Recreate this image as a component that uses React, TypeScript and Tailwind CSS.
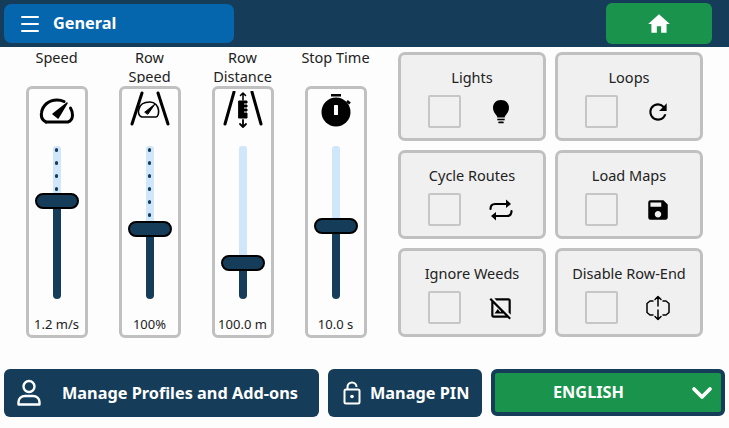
import { MdHome, MdRefresh, MdSave, MdOutlineHideImage } from "react-icons/md";
import { Menu, ChevronDown } from "lucide-react";
import type { ReactNode } from "react";

function GaugeIcon({ size = 36 }: { size?: number }) {
    return (
        <svg width={size} height={size} viewBox="0 0 36 36" fill="none" stroke="currentColor" strokeLinecap="round" strokeLinejoin="round">
            <path d="M7 29 C3 27 2 23 2.500 20 C3.500 12 10 7 18 7 C21 7 23 7.500 25 8.500" strokeWidth="3" />
            <path d="M31.500 15 C33 17.500 33.500 20 33.500 22 C33.500 25 32 28 29 29 L7 29" strokeWidth="3" />
            <path d="M14 21 L28 10 L19 25 Z" fill="currentColor" strokeWidth="1.500" />
        </svg>
    );
}

function RowSpeedIcon() {
    return (
        <svg width="40" height="40" viewBox="0 0 40 40" fill="none" stroke="currentColor" strokeLinecap="round" strokeLinejoin="round">
            <path d="M12 2 L2 33" strokeWidth="3" />
            <path d="M28 2 L38 33" strokeWidth="3" />
            <path d="M12 26 C8 25 8 20 9 18 C10 13 15 11 20 11 C25 11 28 15 28.500 19 C29 22 28 26 26 26 Z" strokeWidth="1.600" />
            <path d="M15 21 L25 13 L18 23 Z" fill="currentColor" strokeWidth="1" />
        </svg>
    );
}

function RowDistanceIcon() {
    return (
        <svg width="40" height="40" viewBox="0 0 40 40" fill="none" stroke="currentColor" strokeLinecap="round" strokeLinejoin="round">
            <path d="M11 1 L2 33" strokeWidth="3" />
            <path d="M29 1 L38 33" strokeWidth="3" />
            <path d="M20 9 L20 2 M17.500 4.500 L20 2 L22.500 4.500" strokeWidth="1.600" />
            <path d="M20 29 L20 36 M17 33 L20 36 L23 33" strokeWidth="1.800" />
            <path d="M16 10 H24 V12 H20.500 V14 H24 V16 H20.500 V18 H24 V20 H20.500 V22 H24 V27 H16 Z" fill="currentColor" strokeWidth="1" />
        </svg>
    );
}

function TimerIcon() {
    return (
        <svg width="36" height="36" viewBox="0 0 36 36" fill="none">
            <rect x="13" y="1" width="10" height="2.500" fill="currentColor" />
            <circle cx="18" cy="19" r="14.500" fill="currentColor" />
            <path d="M29 8 L32 10.500" stroke="currentColor" strokeWidth="2.500" />
            <rect x="16" y="12" width="4" height="10" rx="0.500" fill="#fdfdfd" />
        </svg>
    );
}

function BulbIcon() {
    return (
        <svg width="18" height="26" viewBox="0 0 18 26" fill="currentColor">
            <path d="M9 1 C4 1 1 4.500 1 9 C1 12.500 3 14.500 4.500 16.500 C5 17.200 5.300 18 5.300 18.500 H12.700 C12.700 18 13 17.200 13.500 16.500 C15 14.500 17 12.500 17 9 C17 4.500 14 1 9 1 Z" />
            <rect x="5.300" y="19.700" width="7.400" height="1.600" />
            <rect x="6.200" y="22.500" width="5.600" height="1.800" rx="0.900" />
        </svg>
    );
}

function RepeatIcon() {
    return (
        <svg width="24" height="24" viewBox="0 0 24 24" fill="none" stroke="currentColor" strokeWidth="2.200" strokeLinecap="round" strokeLinejoin="round">
            <path d="M1.500 11 C1.500 7.500 3 6 6 6 H18" />
            <path d="M17 1.500 L22 6 L17 10 Z" fill="currentColor" stroke="none" />
            <path d="M22.500 13 C22.500 16.500 21 18 18 18 H6" />
            <path d="M7 14 L2 18 L7 22.500 Z" fill="currentColor" stroke="none" />
        </svg>
    );
}

function RowEndIcon() {
    return (
        <svg width="26" height="26" viewBox="0 0 26 26" fill="none" stroke="currentColor" strokeWidth="1.500" strokeLinecap="round" strokeLinejoin="round">
            <path d="M8 6 H5 L2 8.500 V17.500 L5 20 H8" />
            <path d="M18 6 H21 L24 8.500 V17.500 L21 20 H18" />
            <path d="M13 11 V1.500 M10 4.500 L13 1.500 L16 4.500" />
            <path d="M13 15 V24.500 M10 21.500 L13 24.500 L16 21.500" />
        </svg>
    );
}

function PersonIcon() {
    return (
        <svg width="24" height="28" viewBox="0 0 24 28" fill="none" stroke="currentColor" strokeWidth="2.400" strokeLinejoin="round">
            <circle cx="12" cy="7.500" r="5.500" />
            <path d="M1.500 25.500 V23 C1.500 19.500 4.500 17 8 17 H16 C19.500 17 22.500 19.500 22.500 23 V25.500 Z" />
        </svg>
    );
}

function LockIcon() {
    return (
        <svg width="18" height="24" viewBox="0 0 18 24" fill="none" stroke="currentColor" strokeWidth="2" strokeLinejoin="round">
            <path d="M4.500 8.500 V6 C4.500 3.500 6.500 1.500 9 1.500 C11.500 1.500 13.500 3.500 13.500 6" />
            <rect x="1.500" y="8.500" width="15" height="14" rx="1.500" />
            <circle cx="9" cy="15.500" r="1.800" fill="currentColor" stroke="none" />
        </svg>
    );
}

function Slider({ label, value, icon, light, dark, dots }: { label: ReactNode; value: string; icon: ReactNode; light: number; dark: number; dots: number }) {
    return (
        <div className="w-[93px] flex flex-col items-center">
            <div className="h-[35px] overflow-hidden text-center text-[14.5px] leading-[19px] text-[#222] whitespace-nowrap">{label}</div>
            <div className="mt-[3px] w-[62px] h-[252px] border-[3px] border-[#c0c0c0] rounded-[6px] flex flex-col items-center bg-[#fdfdfd]">
                <div className="h-[40px] mt-[2px] flex items-center justify-center text-black">{icon}</div>
                <div className="mt-[15px] w-[44px] flex flex-col items-center">
                    <div className="w-[8px] bg-[#cfe6fb] rounded-t-[3px] flex flex-col items-center gap-[9.5px] pt-[2px] overflow-hidden" style={{ height: light }}>
                        {Array.from({ length: dots }).map((_, i) => (
                            <span key={i} className="shrink-0 w-[3.500px] h-[3.500px] rounded-full bg-[#153d5a]" />
                        ))}
                    </div>
                    <div className="w-[44px] h-[16px] bg-[#153d5a] border-2 border-black rounded-[8px]" />
                    <div className="w-[8px] bg-[#153d5a] rounded-b-[4px]" style={{ height: dark }} />
                </div>
                <div className="mt-auto mb-[2px] text-[13px] leading-[18px] text-[#222]">{value}</div>
            </div>
        </div>
    );
}

function Toggle({ label, icon }: { label: string; icon: ReactNode }) {
    return (
        <div className="w-[148px] h-[89px] border-[3.500px] border-[#c0c0c0] rounded-[7px] bg-[#f0f0f0] flex flex-col items-center">
            <div className="mt-[13px] text-[14.5px] leading-[19px] text-[#222] whitespace-nowrap">{label}</div>
            <div className="mt-[8px] w-full flex items-center">
                <div className="ml-[27px] w-[33px] h-[33px] border-[2px] border-[#c6c6c6] rounded-[2px]" />
                <div className="ml-[24px] w-[32px] flex items-center justify-center text-black">{icon}</div>
            </div>
        </div>
    );
}

export default function App() {
    return (
        <div className="w-[729px] h-[428px] overflow-hidden flex flex-col bg-[#fdfdfd] font-['Noto_Sans',sans-serif]">

            {/* Top bar */}
            <header className="h-[47px] shrink-0 bg-[#153d5a] flex items-start justify-between pl-[4px] pr-[17px]">
                <div className="mt-[4px] w-[230px] h-[39px] rounded-[7px] bg-[#0565ad] flex items-center text-white pl-[14px] gap-[11px]">
                    <Menu size={24} strokeWidth={2} />
                    <span className="text-[16.3px] font-bold">General</span>
                </div>
                <div className="mt-[3px] w-[106px] h-[41px] rounded-[6px] bg-[#1a934c] flex items-center justify-center text-white">
                    <MdHome size={26} />
                </div>
            </header>

            {/* Sliders and toggles */}
            <main className="flex flex-1 min-h-0">
                <div className="ml-[10px] mt-[1px] flex">
                    <Slider label="Speed" value="1.2 m/s" icon={<GaugeIcon />} light={47} dark={90} dots={4} />
                    <Slider label={<>Row<br />Speed</>} value="100%" icon={<RowSpeedIcon />} light={75} dark={62} dots={6} />
                    <Slider label={<>Row<br />Distance</>} value="100.0 m" icon={<RowDistanceIcon />} light={109} dark={28} dots={0} />
                    <Slider label="Stop Time" value="10.0 s" icon={<TimerIcon />} light={72} dark={65} dots={0} />
                </div>
                <div className="ml-[16px] mt-[5px] grid grid-cols-[148px_148px] auto-rows-[89px] gap-x-[9px] gap-y-[9px] h-fit">
                    <Toggle label="Lights" icon={<BulbIcon />} />
                    <Toggle label="Loops" icon={<MdRefresh size={26} />} />
                    <Toggle label="Cycle Routes" icon={<RepeatIcon />} />
                    <Toggle label="Load Maps" icon={<MdSave size={26} />} />
                    <Toggle label="Ignore Weeds" icon={<MdOutlineHideImage size={26} />} />
                    <Toggle label="Disable Row-End" icon={<RowEndIcon />} />
                </div>
            </main>

            {/* Bottom actions */}
            <footer className="h-[59px] shrink-0 flex items-start pl-[4px] gap-[9px] text-white text-[16.3px] font-bold">
                <div className="w-[315px] h-[48px] rounded-[6px] bg-[#153d5a] flex items-center pl-[13px] gap-[21px]">
                    <PersonIcon />
                    <span>Manage Profiles and Add-ons</span>
                </div>
                <div className="w-[154px] h-[48px] rounded-[6px] bg-[#153d5a] flex items-center pl-[15px] gap-[9px]">
                    <LockIcon />
                    <span>Manage PIN</span>
                </div>
                <div className="w-[234px] h-[47px] rounded-[6px] border-[4px] border-[#153d5a] bg-[#1a934c] flex items-center relative justify-center">
                    <span className="mr-[39px]">ENGLISH</span>
                    <ChevronDown className="absolute right-[3px]" size={32} strokeWidth={2.800} />
                </div>
            </footer>
        </div>
    );
}
